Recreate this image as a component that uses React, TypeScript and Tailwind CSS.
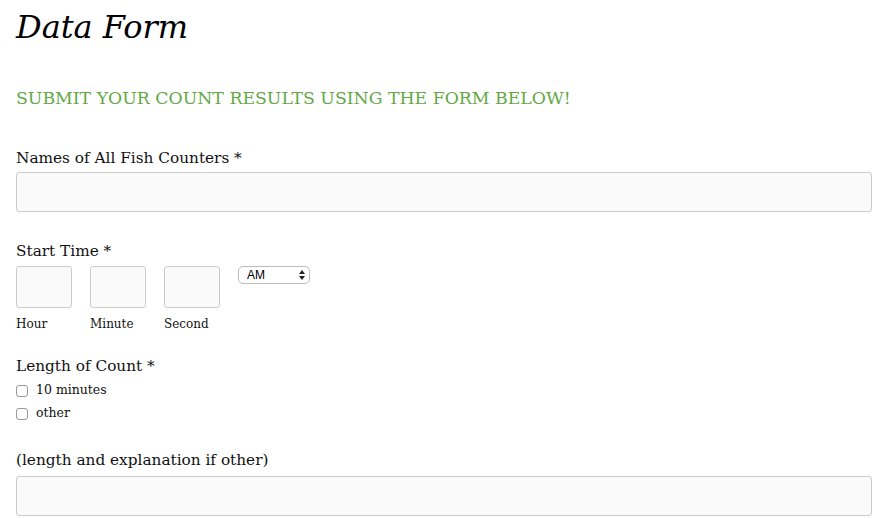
import { FC } from "react";

const serif = "font-['DejaVu_Serif',serif]";

const TextBox: FC = () => (
  <input
    type="text"
    className="block h-10 w-full rounded-[3px] border border-[#cccccc] bg-[#fafafa] outline-none"
  />
);

const TimeBox: FC<{ label: string }> = ({ label }) => (
  <div className="flex flex-col">
    <input
      type="text"
      className="block h-[42px] w-14 rounded-[3px] border border-[#cccccc] bg-[#fafafa] outline-none"
    />
    <span className="mt-[8px] text-[12px] leading-4 text-[#111]">{label}</span>
  </div>
);

const Check: FC<{ label: string }> = ({ label }) => (
  <label className="flex h-[23px] items-center gap-2">
    <input
      type="checkbox"
      className="h-3 w-3 appearance-none rounded-[3px] border border-[#9a9a9a] bg-white"
    />
    <span className="text-[12.5px] text-[#111]">{label}</span>
  </label>
);

export default function App() {
  return (
    <div className={`${serif} h-[518px] w-[878px] overflow-hidden bg-white pl-4 pr-[6px] text-[#111]`}>
      <h1 className="pt-[7px] text-[32px] leading-[40px] italic text-black">Data Form</h1>

      <h2 className="mt-[39px] text-[17.3px] leading-6 uppercase text-[#62a846]">
        Submit your count results using the form below!
      </h2>

      <div className="mt-[38px]">
        <p className="text-[15.3px] leading-5">Names of All Fish Counters *</p>
        <div className="mt-[4px]">
          <TextBox />
        </div>
      </div>

      <div className="mt-[29px]">
        <p className="text-[15.3px] leading-5">Start Time *</p>
        <div className="mt-[5px] flex items-start gap-[18px]">
          <TimeBox label="Hour" />
          <TimeBox label="Minute" />
          <TimeBox label="Second" />
          <div className="relative">
            <select className="block h-[18px] w-[72px] appearance-none rounded-[5px] border border-[#bdbdbd] bg-white pl-[8px] font-['Liberation_Sans',sans-serif] text-[12px] leading-4 text-black outline-none">
              <option>AM</option>
              <option>PM</option>
            </select>
            <svg
              className="pointer-events-none absolute right-[5px] top-[4px]"
              width="6"
              height="10"
              viewBox="0 0 6 10"
            >
              <path d="M3 0 L6 4 L0 4 Z" fill="#222" />
              <path d="M0 6 L6 6 L3 10 Z" fill="#222" />
            </svg>
          </div>
        </div>
      </div>

      <div className="mt-[24px]">
        <p className="text-[15.3px] leading-5">Length of Count *</p>
        <div className="mt-[3px] flex flex-col">
          <Check label="10 minutes" />
          <Check label="other" />
        </div>
      </div>

      <div className="mt-[25px]">
        <p className="text-[15.3px] leading-5">(length and explanation if other)</p>
        <div className="mt-[6px]">
          <TextBox />
        </div>
      </div>
    </div>
  );
}
